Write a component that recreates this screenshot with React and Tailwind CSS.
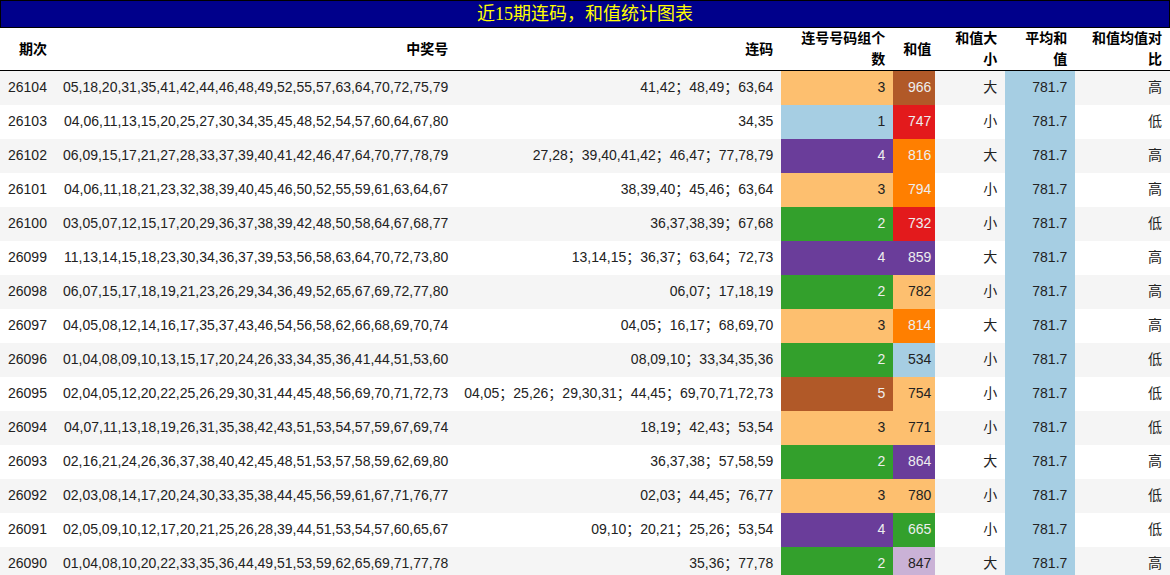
const rows = [
  ['26104','05,18,20,31,35,41,42,44,46,48,49,52,55,57,63,64,70,72,75,79','41,42；48,49；63,64',3,966,'大','高'],
  ['26103','04,06,11,13,15,20,25,27,30,34,35,45,48,52,54,57,60,64,67,80','34,35',1,747,'小','低'],
  ['26102','06,09,15,17,21,27,28,33,37,39,40,41,42,46,47,64,70,77,78,79','27,28；39,40,41,42；46,47；77,78,79',4,816,'大','高'],
  ['26101','04,06,11,18,21,23,32,38,39,40,45,46,50,52,55,59,61,63,64,67','38,39,40；45,46；63,64',3,794,'小','高'],
  ['26100','03,05,07,12,15,17,20,29,36,37,38,39,42,48,50,58,64,67,68,77','36,37,38,39；67,68',2,732,'小','低'],
  ['26099','11,13,14,15,18,23,30,34,36,37,39,53,56,58,63,64,70,72,73,80','13,14,15；36,37；63,64；72,73',4,859,'大','高'],
  ['26098','06,07,15,17,18,19,21,23,26,29,34,36,49,52,65,67,69,72,77,80','06,07；17,18,19',2,782,'小','高'],
  ['26097','04,05,08,12,14,16,17,35,37,43,46,54,56,58,62,66,68,69,70,74','04,05；16,17；68,69,70',3,814,'大','高'],
  ['26096','01,04,08,09,10,13,15,17,20,24,26,33,34,35,36,41,44,51,53,60','08,09,10；33,34,35,36',2,534,'小','低'],
  ['26095','02,04,05,12,20,22,25,26,29,30,31,44,45,48,56,69,70,71,72,73','04,05；25,26；29,30,31；44,45；69,70,71,72,73',5,754,'小','低'],
  ['26094','04,07,11,13,18,19,26,31,35,38,42,43,51,53,54,57,59,67,69,74','18,19；42,43；53,54',3,771,'小','低'],
  ['26093','02,16,21,24,26,36,37,38,40,42,45,48,51,53,57,58,59,62,69,80','36,37,38；57,58,59',2,864,'大','高'],
  ['26092','02,03,08,14,17,20,24,30,33,35,38,44,45,56,59,61,67,71,76,77','02,03；44,45；76,77',3,780,'小','低'],
  ['26091','02,05,09,10,12,17,20,21,25,26,28,39,44,51,53,54,57,60,65,67','09,10；20,21；25,26；53,54',4,665,'小','低'],
  ['26090','01,04,08,10,20,22,33,35,36,44,49,51,53,59,62,65,69,71,77,78','35,36；77,78',2,847,'大','高'],
]

const countCls = {
  1: 'bg-[#a6cee3] text-[#222]',
  2: 'bg-[#33a02c] text-[#eee]',
  3: 'bg-[#fdbf6f] text-[#222]',
  4: 'bg-[#6a3d9a] text-[#eee]',
  5: 'bg-[#b15928] text-[#eee]',
}

const sumCls = {
  966: 'bg-[#b15928] text-[#eee]', 747: 'bg-[#e31a1c] text-[#eee]', 816: 'bg-[#ff7f00] text-[#eee]',
  794: 'bg-[#ff7f00] text-[#eee]', 732: 'bg-[#e31a1c] text-[#eee]', 859: 'bg-[#6a3d9a] text-[#eee]',
  782: 'bg-[#fdbf6f] text-[#222]', 814: 'bg-[#ff7f00] text-[#eee]', 534: 'bg-[#a6cee3] text-[#222]',
  754: 'bg-[#fdbf6f] text-[#222]', 771: 'bg-[#fdbf6f] text-[#222]', 864: 'bg-[#6a3d9a] text-[#eee]',
  780: 'bg-[#fdbf6f] text-[#222]', 665: 'bg-[#33a02c] text-[#eee]', 847: 'bg-[#cab2d6] text-[#222]',
}

export default function App() {
  return (
    <div className="w-[1170px] h-[575px] overflow-hidden bg-white text-[14px] text-[#222]"
      style={{ fontFamily: '"Liberation Sans", "Noto Sans CJK SC", sans-serif' }}>
      <div className="h-[28px] bg-[#00008b] border border-black flex items-center justify-center text-[#ffff00] text-[18px]"
        style={{ fontFamily: '"Liberation Serif", "Noto Sans CJK SC", serif' }}>
        近15期连码，和值统计图表
      </div>
      <table className="w-full border-collapse">
        <thead>
          <tr className="h-[36px] border-b border-black font-bold text-black">
            <th className="w-[54px] px-2 text-right">期次</th>
            <th className="w-[399px] px-2 text-right">中奖号</th>
            <th className="w-[324px] px-2 text-right">连码</th>
            <th className="w-[112px] px-2 text-right">连号号码组个数</th>
            <th className="w-[42px] px-1 text-right">和值</th>
            <th className="w-[70px] px-2 text-right">和值大小</th>
            <th className="w-[70px] px-2 text-right">平均和值</th>
            <th className="px-2 text-right">和值均值对比</th>
          </tr>
        </thead>
        <tbody>
          {rows.map((r, i) => (
            <tr key={r[0]} className={`h-[34px] ${i % 2 === 0 ? 'bg-[#f5f5f5]' : 'bg-white'}`}>
              <td className="px-2 text-right">{r[0]}</td>
              <td className="px-2 text-right whitespace-nowrap">{r[1]}</td>
              <td className="px-2 text-right whitespace-nowrap">{r[2]}</td>
              <td className={`px-2 text-right ${countCls[r[3]]}`}>{r[3]}</td>
              <td className={`px-1 text-right ${sumCls[r[4]]}`}>{r[4]}</td>
              <td className="px-2 text-right">{r[5]}</td>
              <td className="px-2 text-right bg-[#a6cee3]">781.7</td>
              <td className="px-2 text-right">{r[6]}</td>
            </tr>
          ))}
        </tbody>
      </table>
    </div>
  )
}
